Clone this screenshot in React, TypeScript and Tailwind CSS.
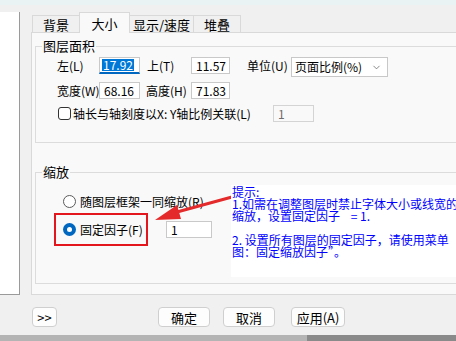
import { ChevronDown } from "lucide-react";

const cjk = "font-['Noto_Sans_CJK_SC',sans-serif]";

function Field({ value, w, className = "" }: { value: string; w: string; className?: string }) {
  return (
    <div className={`${w} h-[17px] shrink-0 bg-white border border-[#c9c9c9] flex items-center pl-[4px] text-[12px] leading-none text-black ${className}`}>
      {value}
    </div>
  );
}

function Btn({ label, w }: { label: string; w: string }) {
  return (
    <div className={`${w} h-[20px] bg-[#fdfdfd] border border-[#cfcfcf] rounded-[4px] flex items-center justify-center text-[13px] leading-none text-black`}>
      {label}
    </div>
  );
}

export default function App() {
  return (
    <div className={`relative w-[456px] h-[341px] overflow-hidden bg-[#f0f0f0] whitespace-nowrap ${cjk}`}>
      <div className="h-[5px] bg-[#eaf3f3]" />
      <div className="h-[7px]" />

      <div className="flex h-[283px]">
        <div className="w-[20px] bg-white border-r border-b border-[#9a9a9a]" />

        <div className="ml-[11px] flex-1 flex flex-col min-w-0">
          {/* tabs */}
          <div className="h-[20px] flex items-end pl-[1px] text-[13px] leading-none text-black">
            <div className="w-[47px] h-[17px] border-t border-l border-[#d9d9d9] flex items-center justify-center">背景</div>
            <div className="relative z-10 -mb-px w-[51px] h-[21px] bg-[#f9f9f9] border-t border-l border-r border-[#d9d9d9] flex items-center justify-center">大小</div>
            <div className="w-[63px] h-[17px] border-t border-[#d9d9d9] flex items-center justify-center">显示/速度</div>
            <div className="w-[48px] h-[17px] border-t border-l border-r border-[#d9d9d9] flex items-center justify-center">堆叠</div>
          </div>

          {/* pane */}
          <div className="flex-1 w-[440px] bg-[#f9f9f9] border-t border-l border-b border-[#d9d9d9] pl-[3px]">
            <fieldset className="mt-[5px] h-[105px] w-[440px] border border-[#dcdcdc]">
              <legend className="ml-[6px] px-[1px] text-[13px] leading-[16px] text-black">图层面积</legend>
              <div className="pl-[21px] pt-[3px] text-[12px] leading-none text-black">
                <div className="flex items-start h-[20px]">
                  <div className="w-[42px] h-[17px] flex items-center">左(L)</div>
                  <div className="w-[41px] h-[17px] bg-white border border-[#c9c9c9] border-b-2 border-b-[#0067c0] flex items-center pl-[2px]">
                    <span className="bg-[#0078d7] text-white px-[1px] h-[12px] flex items-center">17.92</span>
                  </div>
                  <div className="ml-[7px] w-[44px] h-[17px] flex items-center">上(T)</div>
                  <Field value="11.57" w="w-[39px]" />
                  <div className="ml-[17px] w-[44px] h-[17px] flex items-center">单位(U)</div>
                  <div className="w-[97px] h-[20px] bg-white border border-[#c8c8c8] flex items-center pl-[3px] pr-[5px]">
                    <span className="flex-1">页面比例(%)</span>
                    <ChevronDown size={11} strokeWidth={1.5} className="text-[#555]" />
                  </div>
                </div>
                <div className="flex items-start mt-[5px] h-[17px]">
                  <div className="w-[42px] h-[17px] flex items-center">宽度(W)</div>
                  <Field value="68.16" w="w-[41px]" className="pl-[3px]" />
                  <div className="ml-[6px] w-[45px] h-[17px] flex items-center">高度(H)</div>
                  <Field value="71.83" w="w-[39px]" />
                </div>
                <div className="flex items-center mt-[6px] h-[17px]">
                  <div className="ml-[1px] w-[13px] h-[13px] bg-white border border-[#333] rounded-[3px]" />
                  <span className="ml-[2px] w-[200px]">轴长与轴刻度以X: Y轴比例关联(L)</span>
                  <div className="w-[41px] h-[17px] border border-[#d4d4d4] flex items-center pl-[4px] text-[#6d6d6d]">1</div>
                </div>
              </div>
            </fieldset>

            <fieldset className="mt-[21px] h-[120px] w-[440px] border border-[#dcdcdc]">
              <legend className="ml-[6px] px-[1px] text-[13px] leading-[16px] text-black">缩放</legend>
              <div className="pl-[18px] pt-[13px] text-[12px] leading-none text-black">
                <div className="pl-[9px] flex items-center gap-[4px] h-[17px]">
                  <div className="w-[13px] h-[13px] rounded-full border border-[#5a5a5a] bg-white" />
                  <span>随图层框架一同缩放(R)</span>
                </div>
                <div className="flex items-center mt-[3px]">
                  <div className="w-[94px] h-[33px] border-2 border-[#e3161d] flex items-center pl-[7px] gap-[4px]">
                    <div className="w-[13px] h-[13px] rounded-full bg-[#0067c0] flex items-center justify-center">
                      <div className="w-[5px] h-[5px] rounded-full bg-white" />
                    </div>
                    <span>固定因子(F)</span>
                  </div>
                  <Field value="1" w="w-[46px]" className="ml-[18px]" />
                </div>
              </div>
            </fieldset>
          </div>
        </div>
      </div>

      {/* buttons */}
      <div className="mt-[12px] flex pl-[32px]">
        <Btn label=">>" w="w-[25px]" />
        <div className="ml-[101px]"><Btn label="确定" w="w-[52px]" /></div>
        <div className="ml-[13px]"><Btn label="取消" w="w-[52px]" /></div>
        <div className="ml-[16px]"><Btn label="应用(A)" w="w-[54px]" /></div>
      </div>

      <div className="mt-[8px] flex h-[6px]">
        <div className="w-[307px] bg-[#b4b4b4]" />
        <div className="flex-1 bg-[#8a8a8a]" />
      </div>

      {/* annotation: arrow */}
      <svg className="absolute left-0 top-0 pointer-events-none" width="456" height="341">
        <line x1="232" y1="197" x2="177" y2="212" stroke="#e42a2a" strokeWidth="3" />
        <polygon points="155,220 177,205 181,219" fill="#e42a2a" />
      </svg>

      {/* annotation: tip box */}
      <div className="absolute left-[231px] top-[185px] w-[225px] h-[92px] bg-white pl-[1px] pt-[1px] overflow-hidden text-[12px] leading-[12px] text-[#0000ff]">
        <div>提示:</div>
        <div>1.如需在调整图层时禁止字体大小或线宽的</div>
        <div>缩放，设置固定因子&nbsp;&nbsp;&nbsp;&nbsp;= 1.</div>
        <div>&nbsp;</div>
        <div>2. 设置所有图层的固定因子，请使用菜单</div>
        <div>图：固定缩放因子”。</div>
      </div>
    </div>
  );
}
